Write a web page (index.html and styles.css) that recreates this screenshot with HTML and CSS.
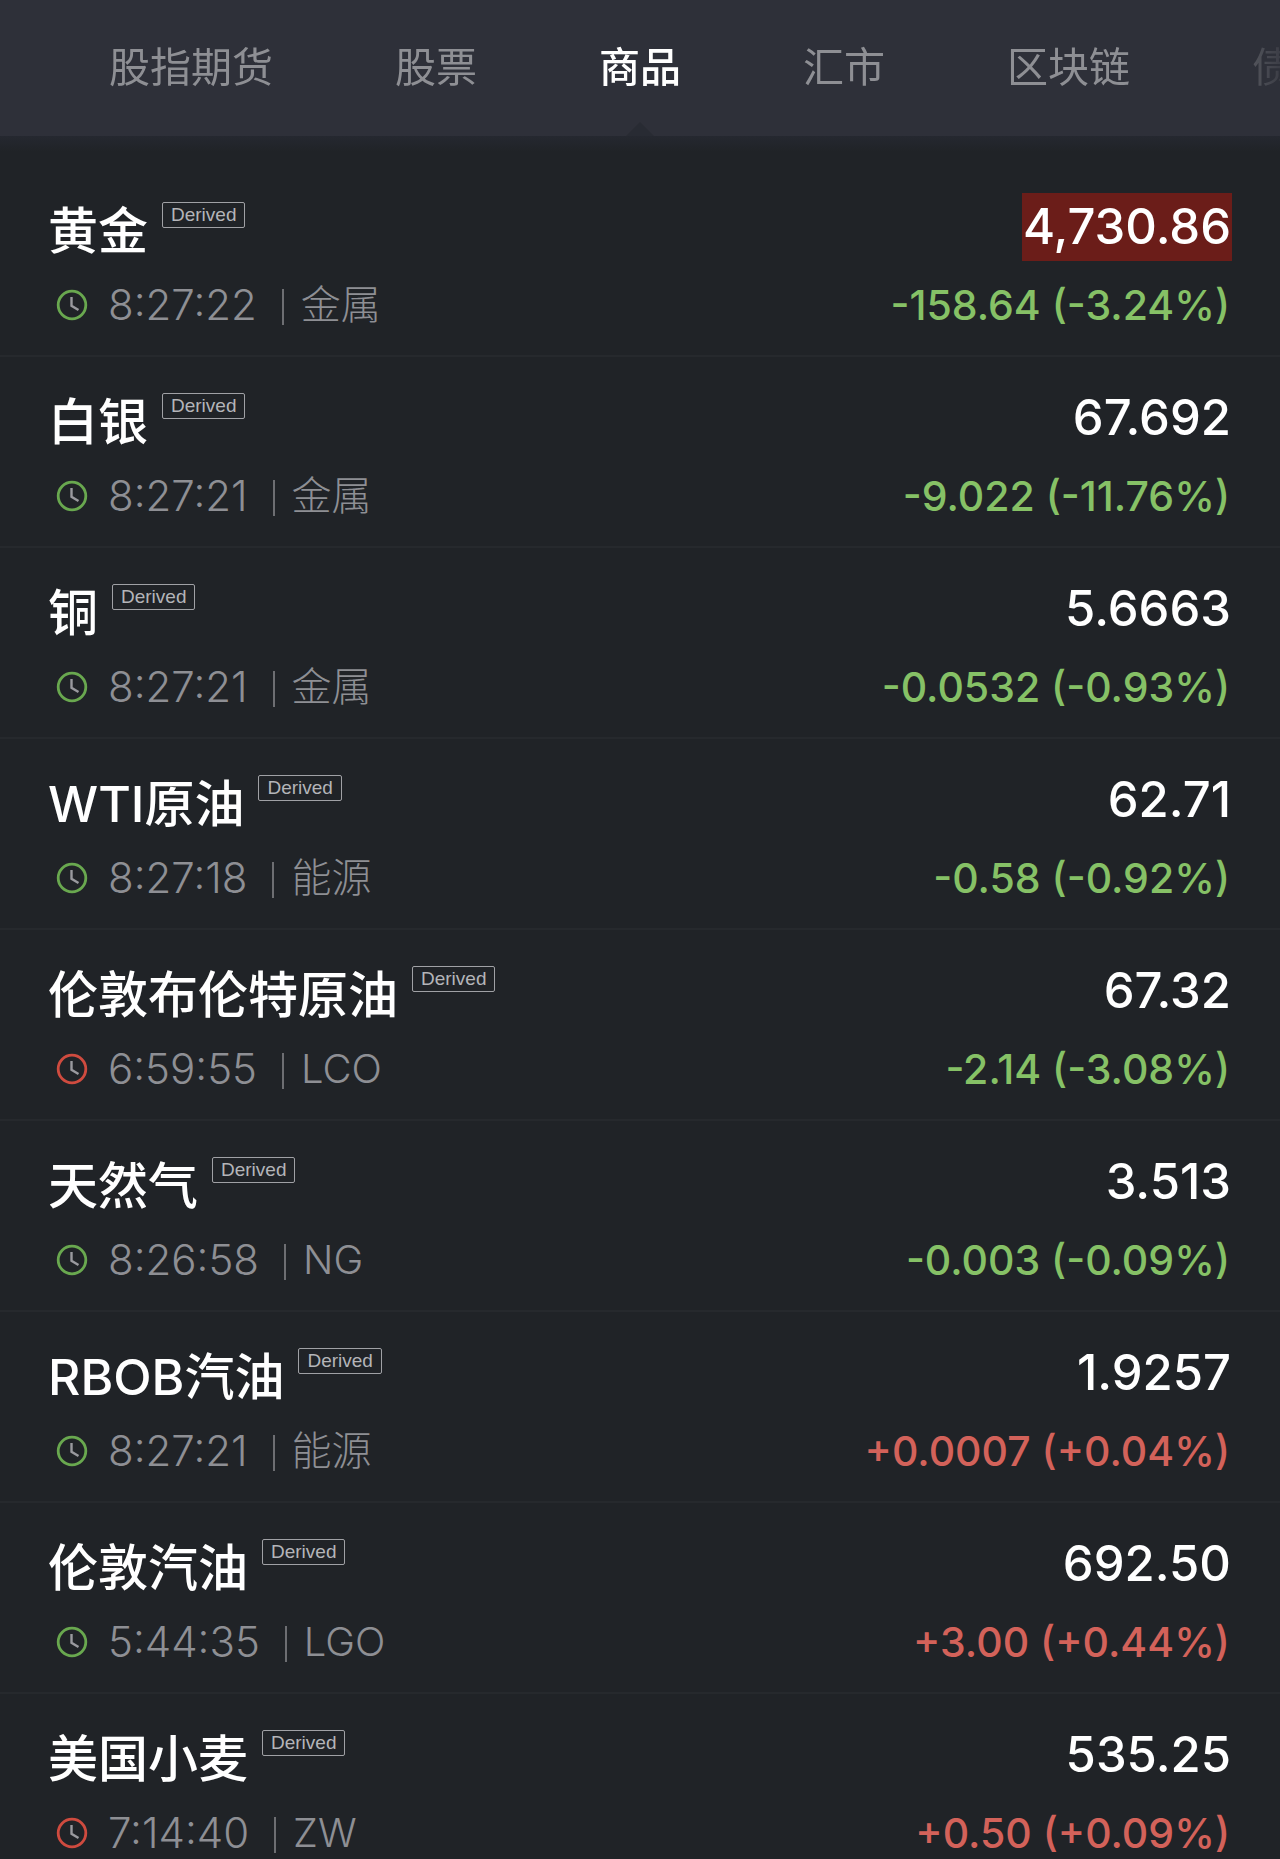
FILE: index.html
```html
<!DOCTYPE html>
<html lang="zh-CN">
<head>
<meta charset="utf-8">
<meta name="viewport" content="width=device-width, initial-scale=1">
<title>商品</title>
<link rel="stylesheet" href="styles.css">
</head>
<body>
<svg class="sprite" aria-hidden="true">
  <symbol id="clock" viewBox="0 0 32 32">
    <circle cx="16" cy="16" r="13.8" fill="none" stroke="currentColor" stroke-width="2.8"/>
    <path d="M15.5 8v8.8l7 4.2" fill="none" stroke="#9a9a9f" stroke-width="2.4"/>
  </symbol>
</svg>
<div class="app">
  <header class="header">
    <nav class="tabs">
      <button class="tab" type="button">股指期货</button>
      <button class="tab" type="button">股票</button>
      <button class="tab active" type="button" aria-current="page">商品</button>
      <button class="tab" type="button">汇市</button>
      <button class="tab" type="button">区块链</button>
      <button class="tab" type="button">债券</button>
    </nav>
  </header>
  <main class="content">
    <ul class="quotes">
      <li class="quote">
        <div class="info">
          <div class="title"><h2 class="name">黄金</h2><span class="badge">Derived</span></div>
          <div class="meta"><svg class="clock open"><use href="#clock"/></svg><time class="time">8:27:22</time><span class="kind">金属</span></div>
        </div>
        <div class="figures"><span class="price flash">4,730.86</span><span class="change down">-158.64 (-3.24%)</span></div>
      </li>
      <li class="quote">
        <div class="info">
          <div class="title"><h2 class="name">白银</h2><span class="badge">Derived</span></div>
          <div class="meta"><svg class="clock open"><use href="#clock"/></svg><time class="time">8:27:21</time><span class="kind">金属</span></div>
        </div>
        <div class="figures"><span class="price">67.692</span><span class="change down">-9.022 (-11.76%)</span></div>
      </li>
      <li class="quote">
        <div class="info">
          <div class="title"><h2 class="name">铜</h2><span class="badge">Derived</span></div>
          <div class="meta"><svg class="clock open"><use href="#clock"/></svg><time class="time">8:27:21</time><span class="kind">金属</span></div>
        </div>
        <div class="figures"><span class="price">5.6663</span><span class="change down">-0.0532 (-0.93%)</span></div>
      </li>
      <li class="quote">
        <div class="info">
          <div class="title"><h2 class="name">WTI原油</h2><span class="badge">Derived</span></div>
          <div class="meta"><svg class="clock open"><use href="#clock"/></svg><time class="time">8:27:18</time><span class="kind">能源</span></div>
        </div>
        <div class="figures"><span class="price">62.71</span><span class="change down">-0.58 (-0.92%)</span></div>
      </li>
      <li class="quote">
        <div class="info">
          <div class="title"><h2 class="name">伦敦布伦特原油</h2><span class="badge">Derived</span></div>
          <div class="meta"><svg class="clock closed"><use href="#clock"/></svg><time class="time">6:59:55</time><span class="kind">LCO</span></div>
        </div>
        <div class="figures"><span class="price">67.32</span><span class="change down">-2.14 (-3.08%)</span></div>
      </li>
      <li class="quote">
        <div class="info">
          <div class="title"><h2 class="name">天然气</h2><span class="badge">Derived</span></div>
          <div class="meta"><svg class="clock open"><use href="#clock"/></svg><time class="time">8:26:58</time><span class="kind">NG</span></div>
        </div>
        <div class="figures"><span class="price">3.513</span><span class="change down">-0.003 (-0.09%)</span></div>
      </li>
      <li class="quote">
        <div class="info">
          <div class="title"><h2 class="name">RBOB汽油</h2><span class="badge">Derived</span></div>
          <div class="meta"><svg class="clock open"><use href="#clock"/></svg><time class="time">8:27:21</time><span class="kind">能源</span></div>
        </div>
        <div class="figures"><span class="price">1.9257</span><span class="change up">+0.0007 (+0.04%)</span></div>
      </li>
      <li class="quote">
        <div class="info">
          <div class="title"><h2 class="name">伦敦汽油</h2><span class="badge">Derived</span></div>
          <div class="meta"><svg class="clock open"><use href="#clock"/></svg><time class="time">5:44:35</time><span class="kind">LGO</span></div>
        </div>
        <div class="figures"><span class="price">692.50</span><span class="change up">+3.00 (+0.44%)</span></div>
      </li>
      <li class="quote">
        <div class="info">
          <div class="title"><h2 class="name">美国小麦</h2><span class="badge">Derived</span></div>
          <div class="meta"><svg class="clock closed"><use href="#clock"/></svg><time class="time">7:14:40</time><span class="kind">ZW</span></div>
        </div>
        <div class="figures"><span class="price">535.25</span><span class="change up">+0.50 (+0.09%)</span></div>
      </li>
    </ul>
  </main>
</div>
</body>
</html>
```
FILE: styles.css
```css
* {
  box-sizing: border-box;
}

body {
  margin: 0;
  background: #202327;
  color: #fff;
  font-family: Inter, "Noto Sans CJK SC", sans-serif;
}

.sprite {
  display: none;
}

.app {
  display: flex;
  flex-direction: column;
  height: 100vh;
}

.header {
  flex: none;
  background: #2e3039;
}

.tabs {
  display: flex;
  gap: 122px;
  height: 136px;
  padding: 0 0 0 109px;
  overflow: hidden;
  mask-image: linear-gradient(to right, #000 calc(100% - 100px), rgb(0 0 0 / 15%));
}

.tab {
  position: relative;
  flex: none;
  padding: 0 0 8px;
  border: 0;
  background: none;
  color: #8e8f94;
  font: 400 41px/60px "Noto Sans CJK SC", sans-serif;
}

.tab.active {
  color: #fff;
  font-weight: 500;
}

/* notch pointing at the active tab */
.tab.active::after {
  content: "";
  position: absolute;
  left: 50%;
  bottom: 0;
  width: 28px;
  height: 14px;
  margin-left: -14px;
  background: #282b33;
  clip-path: polygon(50% 0, 100% 100%, 0 100%);
}

.content {
  flex: 1;
  min-height: 0;
  padding-top: 30px;
  overflow-y: auto;
  scrollbar-width: none;
  background: linear-gradient(#252830, #202327 16px);
}

.quotes {
  margin: 0;
  padding: 0;
  list-style: none;
}

.quote {
  display: flex;
  justify-content: space-between;
  padding: 27px 48px 24px;
  border-bottom: 2px solid #26292d;
}

.title {
  display: flex;
  align-items: flex-start;
  gap: 14px;
}

.name {
  margin: 4px 0 0;
  font-size: 50px;
  font-weight: 500;
  line-height: 68px;
}

.badge {
  margin-top: 9px;
  padding: 0 8px;
  border: 1px solid #a0a1a5;
  border-radius: 2px;
  color: #b4b5b9;
  font: 19px/24px "Liberation Sans", Arial, sans-serif;
}

.meta {
  display: flex;
  align-items: center;
  height: 52px;
  margin-top: 14px;
  padding-left: 8px;
  color: #8e8f94;
  font-size: 42px;
  font-weight: 300;
  line-height: 52px;
}

.clock {
  width: 32px;
  height: 32px;
  margin-right: 20px;
}

.clock.open {
  color: #69a84f;
}

.clock.closed {
  color: #cf4b3f;
}

.kind {
  display: flex;
  align-items: center;
  font-size: 40px;
}

.kind::before {
  content: "";
  width: 2px;
  height: 36px;
  margin: 4px 17px 0 25px;
  background: #6d6e72;
}

.figures {
  display: flex;
  flex-direction: column;
  align-items: flex-end;
}

.price {
  padding: 0 1px;
  font-size: 49px;
  font-weight: 500;
  line-height: 68px;
}

.flash {
  background: #6b1d19;
}

.change {
  margin-top: 18px;
  padding-right: 2px;
  font-size: 41px;
  font-weight: 500;
  line-height: 52px;
}

.down {
  color: #86c166;
}

.up {
  color: #d3625a;
}
```
